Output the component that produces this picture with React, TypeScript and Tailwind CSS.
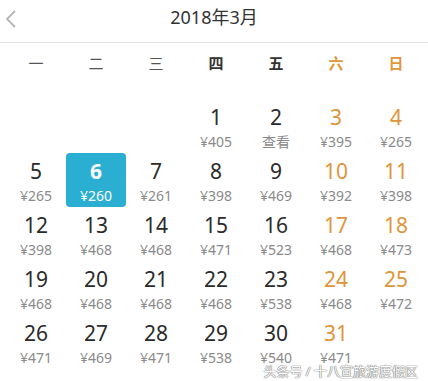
const weekdays = [
  { label: '一', cls: 'text-[#555] font-normal' },
  { label: '二', cls: 'text-[#555] font-normal' },
  { label: '三', cls: 'text-[#555] font-normal' },
  { label: '四', cls: 'text-[#333] font-bold' },
  { label: '五', cls: 'text-[#333] font-bold' },
  { label: '六', cls: 'text-[#e0953a] font-bold' },
  { label: '日', cls: 'text-[#e0953a] font-bold' },
];

const prices: Record<number, string> = {
  1: '¥405', 2: '查看', 3: '¥395', 4: '¥265',
  5: '¥265', 6: '¥260', 7: '¥261', 8: '¥398', 9: '¥469', 10: '¥392', 11: '¥398',
  12: '¥398', 13: '¥468', 14: '¥468', 15: '¥471', 16: '¥523', 17: '¥468', 18: '¥473',
  19: '¥468', 20: '¥468', 21: '¥468', 22: '¥468', 23: '¥538', 24: '¥468', 25: '¥472',
  26: '¥471', 27: '¥469', 28: '¥471', 29: '¥538', 30: '¥540', 31: '¥471',
};

const cells: (number | null)[] = [null, null, null, ...Array.from({ length: 31 }, (_, i) => i + 1)];

export default function App() {
  return (
    <div
      className="relative w-[428px] h-[381px] bg-white overflow-hidden"
      style={{ fontFamily: '"Noto Sans", "Noto Sans CJK SC", sans-serif' }}
    >
      <div className="relative h-[43px] flex items-center justify-center border-b border-[#e3e3e3]">
        <svg className="absolute left-[4px] top-[9px]" width="14" height="20" viewBox="0 0 14 20">
          <polyline points="11,2 3,10 11,18" fill="none" stroke="#b5b5b5" strokeWidth="1.8" />
        </svg>
        <span className="text-[18px] text-[#333] leading-none -mt-[9px]">2018年3月</span>
      </div>

      <div className="grid grid-cols-7 pl-[6px] pr-[2px] h-[40px] items-center">
        {weekdays.map((w) => (
          <div key={w.label} className={`text-center text-[15px] ${w.cls}`}>
            {w.label}
          </div>
        ))}
      </div>

      <div className="grid grid-cols-7 pl-[6px] pr-[2px] pt-[16px]">
        {cells.map((d, i) => {
          if (d === null) return <div key={`e${i}`} className="h-[54px]" />;
          const col = i % 7;
          const weekend = col >= 5;
          const selected = d === 6;
          return (
            <div
              key={d}
              className={`h-[54px] flex flex-col items-center pt-[4px] rounded-[4px] ${selected ? 'bg-[#2aafd3]' : ''}`}
            >
              <span
                className={`text-[21px] leading-[29px] ${
                  selected ? 'text-white font-bold' : weekend ? 'text-[#e0953a]' : 'text-[#2b2b2b]'
                }`}
              >
                {d}
              </span>
              <span className={`text-[14px] leading-[19px] ${selected ? 'text-white' : 'text-[#8a8a8a]'}`}>
                {prices[d]}
              </span>
            </div>
          );
        })}
      </div>

      <div
        className="absolute right-[10px] top-[362px] text-[13px] leading-[18px] text-white whitespace-nowrap"
        style={{ textShadow: '0 0 1px #777, 0 0 1px #777, 0 0 1px #777' }}
      >
        头条号 / 十八宣旅游度假区
      </div>
    </div>
  );
}
